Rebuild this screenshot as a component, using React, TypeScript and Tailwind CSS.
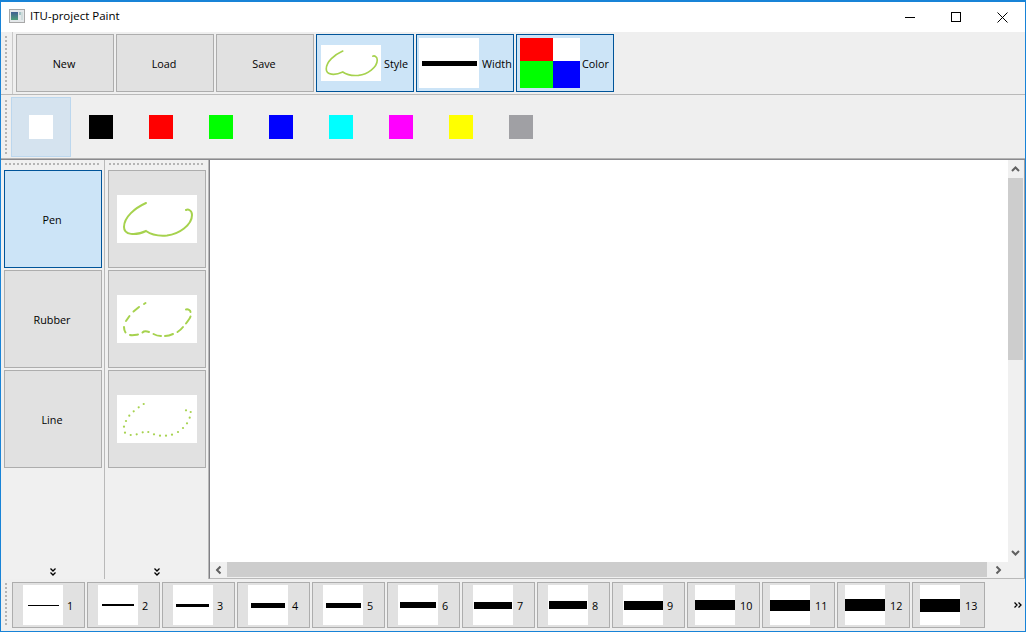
import React from "react";

const CURVE = "M29 8 C 18 13, 7 22, 7 32 C 7 40, 18 41, 29 36 C 36 41, 44 41, 50 40.5 C 62 39, 75 30, 75 20 C 75 15, 71 14, 69 15";

function Curve({ className, sw = 2 }: { className: string; sw?: number }) {
  return (
    <svg viewBox="0 0 80 48" className={className}>
      <path d={CURVE} fill="none" stroke="#a6d24e" strokeWidth={sw} strokeLinecap="round" />
    </svg>
  );
}

function Dashed({ className }: { className: string }) {
  const segs = [
    "M27 9 L28.500 8", "M16.500 16.500 L22 12", "M9 26 L12.500 21", "M7 32 C7 35 7.500 36 8.500 37.500",
    "M13 40 C16 40.500 18 40 21 39.500", "M25.500 37.500 C27 36 29 36 32 37", "M36.500 39 C39 40.500 41 41 44 41",
    "M48 41 C50 41 53 40.500 56 39", "M60.500 37 C63 35.500 64.500 34 66 32", "M69 28.500 C71 26 73 23 73.500 21.500",
    "M73.500 17 C73.500 15 71 14 69 14.500",
  ];
  return (
    <svg viewBox="0 0 80 48" className={className}>
      {segs.map((d) => (
        <path key={d} d={d} fill="none" stroke="#a6d24e" strokeWidth="2" strokeLinecap="round" />
      ))}
    </svg>
  );
}

function Dotted({ className }: { className: string }) {
  const pts = [
    [26.7, 9], [21.7, 12.3], [16.7, 16.3], [12.3, 20.7], [9, 26], [7, 31.7], [8, 37.7], [13.7, 40], [19.7, 39.3],
    [25.7, 37.3], [31.3, 37], [37, 39.3], [43, 40.7], [49, 40.7], [55, 39.7], [61, 37], [66, 33], [70, 28.3],
    [72.7, 22.7], [73.7, 17], [69, 15.3],
  ];
  return (
    <svg viewBox="0 0 80 48" className={className}>
      {pts.map(([x, y]) => (
        <circle key={`${x}-${y}`} cx={x} cy={y} r="1.1" fill="#a6d24e" />
      ))}
    </svg>
  );
}

const HANDLE_H = "h-[2px] bg-[linear-gradient(90deg,#b4b4b4_2px,transparent_2px)] bg-[length:4px_2px]";
const HANDLE_V = "w-[2px] bg-[linear-gradient(180deg,#b4b4b4_2px,transparent_2px)] bg-[length:2px_4px]";

function Btn({ children, on, className }: { children?: React.ReactNode; on?: boolean; className: string }) {
  return (
    <div
      className={`flex shrink-0 items-center justify-center border ${on ? "border-[#005499] bg-[#cce4f7]" : "border-[#adadad] bg-[#e1e1e1]"} ${className}`}
    >
      {children}
    </div>
  );
}

function Label({ children, className = "" }: { children: React.ReactNode; className?: string }) {
  return <span className={`pt-[2px] ${className}`}>{children}</span>;
}

function ChevronsDown() {
  return (
    <svg width="6" height="8" viewBox="0 0 6 8">
      <path d="M0.500 0.500 L3 3 L5.500 0.500 M0.500 4.500 L3 7 L5.500 4.500" fill="none" stroke="#000" strokeWidth="1.3" />
    </svg>
  );
}

function ChevronsRight() {
  return (
    <svg width="8" height="6" viewBox="0 0 8 6">
      <path d="M0.500 0.500 L3 3 L0.500 5.500 M4.500 0.500 L7 3 L4.500 5.500" fill="none" stroke="#000" strokeWidth="1.3" />
    </svg>
  );
}

function Arrow({ rot }: { rot: string }) {
  return (
    <svg width="9" height="6" viewBox="0 0 9 6" className={rot}>
      <path d="M1 5 L4.500 1.500 L8 5" fill="none" stroke="#606060" strokeWidth="2" />
    </svg>
  );
}

const swatches = ["#ffffff", "#000000", "#ff0000", "#00ff00", "#0000ff", "#00ffff", "#ff00ff", "#ffff00", "#a0a0a4"];
const widths = [1, 2, 3, 5, 5, 6, 7, 8, 9, 10, 11, 12, 13];
const lineSpans: [number, number][] = [[5, 36], [4, 36], [3, 36], [3, 37], [3, 38], [2, 38], [1, 39], [1, 39], [1, 40], [0, 40], [0, 40], [0, 40], [0, 40]];

export default function App() {
  return (
    <div className="flex h-[632px] w-[1026px] flex-col overflow-hidden border border-t-2 border-[#1883d7] bg-[#f0f0f0] font-['Open_Sans','Noto_Sans',sans-serif] text-[10.8px] text-black">
      {/* Title bar */}
      <div className="flex h-[30px] shrink-0 items-center bg-white">
        <svg width="16" height="14" viewBox="0 0 16 14" className="ml-[8px] mt-[-2px]">
          <defs>
            <linearGradient id="ico" x1="0" y1="0" x2="0" y2="1">
              <stop offset="0" stopColor="#3f5f92" />
              <stop offset="1" stopColor="#4f9f7a" />
            </linearGradient>
          </defs>
          <rect x="0.500" y="0.500" width="15" height="13" fill="#e4e8ea" stroke="#a8a8a8" />
          <rect x="2" y="3" width="7" height="8" fill="url(#ico)" />
          <rect x="10" y="3" width="2" height="3" fill="#a4c4c4" />
          <rect x="12" y="3" width="2" height="8" fill="#cfdcdc" />
        </svg>
        <span className="ml-[5px] mt-[-2px] text-[11.5px] leading-none">ITU-project Paint</span>
        <div className="ml-auto flex h-full items-center">
          <div className="flex h-full w-[46px] items-center justify-center">
            <div className="h-px w-[10px] bg-black" />
          </div>
          <div className="flex h-full w-[46px] items-center justify-center">
            <div className="h-[10px] w-[10px] border border-black" />
          </div>
          <div className="flex h-full w-[46px] items-center justify-center">
            <svg width="11" height="11" viewBox="0 0 11 11">
              <path d="M0.500 0.500 L10.500 10.500 M10.500 0.500 L0.500 10.500" stroke="#000" strokeWidth="1" />
            </svg>
          </div>
        </div>
      </div>

      {/* Main toolbar */}
      <div className="flex h-[63px] shrink-0 items-center border-b border-[#b9b9b9] bg-[#efefef]">
        <div className={`ml-[4px] mr-[5px] h-[54px] shrink-0 ${HANDLE_V}`} />
        <div className="h-full w-px bg-[#c8c8c8]" />
        <div className="ml-[3px] flex gap-[2px]">
          <Btn className="h-[58px] w-[98px]"><Label className="pr-[2px]">New</Label></Btn>
          <Btn className="h-[58px] w-[98px]"><Label className="pr-[2px]">Load</Label></Btn>
          <Btn className="h-[58px] w-[98px]"><Label className="pr-[2px]">Save</Label></Btn>
          <Btn on className="h-[58px] w-[98px] justify-start pl-[4px]">
            <div className="h-[36px] w-[60px] bg-white">
              <Curve className="h-[36px] w-[60px]" sw={2.2} />
            </div>
            <Label className="ml-[3px]">Style</Label>
          </Btn>
          <Btn on className="h-[58px] w-[98px] justify-start pl-[2px]">
            <div className="flex h-[50px] w-[60px] items-center justify-center bg-white pl-[1px]">
              <div className="h-[5px] w-[55px] bg-black" />
            </div>
            <Label className="ml-[3px]">Width</Label>
          </Btn>
          <Btn on className="h-[58px] w-[98px] justify-start pl-[3px]">
            <div className="grid h-[50px] w-[60px] grid-cols-[33px_27px] grid-rows-[23px_27px]">
              <div className="bg-[#ff0000]" />
              <div className="bg-white" />
              <div className="bg-[#00ff00]" />
              <div className="bg-[#0000ff]" />
            </div>
            <Label className="ml-[2px]">Color</Label>
          </Btn>
        </div>
      </div>

      {/* Colour toolbar */}
      <div className="flex h-[65px] shrink-0 items-center border-b border-[#8a8a8e] bg-[#efefef] shadow-[inset_0_-1px_0_#b4b4b4]">
        <div className={`ml-[4px] mr-[4px] h-[54px] shrink-0 ${HANDLE_V}`} />
        <div className="flex">
          {swatches.map((c, i) => (
            <div
              key={c}
              className={`flex h-[60px] w-[60px] items-center justify-center border ${i === 0 ? "border-[#bcd7ee] bg-[#d5e3ef]" : "border-transparent"}`}
            >
              <div className="h-[24px] w-[24px]" style={{ backgroundColor: c }} />
            </div>
          ))}
        </div>
      </div>

      {/* Body */}
      <div className="flex min-h-0 flex-1">
        <div className="flex w-[104px] shrink-0 flex-col border-r border-[#b9b9b9] pl-[3px] pt-[3px]">
          <div className={`ml-[1px] w-[96px] ${HANDLE_H}`} />
          <div className="mt-[5px] flex flex-col gap-[2px]">
            <Btn on className="h-[98px] w-[98px]"><Label className="pr-[2px]">Pen</Label></Btn>
            <Btn className="h-[98px] w-[98px]"><Label className="pr-[2px]">Rubber</Label></Btn>
            <Btn className="h-[98px] w-[98px]"><Label className="pr-[2px]">Line</Label></Btn>
          </div>
          <div className="mb-[3px] mt-auto flex h-[8px] w-[98px] items-center justify-center">
            <ChevronsDown />
          </div>
        </div>
        <div className="flex w-[104px] shrink-0 flex-col border-r border-[#b9b9b9] pl-[3px] pt-[3px]">
          <div className={`ml-[1px] w-[96px] ${HANDLE_H}`} />
          <div className="mt-[5px] flex flex-col gap-[2px]">
            <Btn className="h-[98px] w-[98px]">
              <div className="bg-white"><Curve className="h-[48px] w-[80px]" /></div>
            </Btn>
            <Btn className="h-[98px] w-[98px]">
              <div className="bg-white"><Dashed className="h-[48px] w-[80px]" /></div>
            </Btn>
            <Btn className="h-[98px] w-[98px]">
              <div className="bg-white"><Dotted className="h-[48px] w-[80px]" /></div>
            </Btn>
          </div>
          <div className="mb-[3px] mt-auto flex h-[8px] w-[98px] items-center justify-center">
            <ChevronsDown />
          </div>
        </div>

        {/* Canvas */}
        <div className="flex min-w-0 flex-1 border-b border-l border-r border-[#a0a0a4] border-b-[#b9b9b9] border-l-[#808085] bg-white">
          <div className="flex min-w-0 flex-1 flex-col">
            <div className="flex min-h-0 flex-1">
              <div className="flex-1 bg-white" />
              <div className="flex w-[15px] shrink-0 flex-col bg-[#f0f0f0]">
                <div className="flex h-[18px] items-center justify-center"><Arrow rot="" /></div>
                <div className="h-[182px] bg-[#cdcdcd]" />
                <div className="flex-1" />
                <div className="flex h-[18px] items-center justify-center"><Arrow rot="rotate-180" /></div>
              </div>
            </div>
            <div className="flex h-[15px] shrink-0 bg-[#f0f0f0]">
              <div className="flex w-[17px] items-center justify-center"><Arrow rot="-rotate-90" /></div>
              <div className="w-[760px] bg-[#cdcdcd]" />
              <div className="flex w-[22px] items-center justify-center"><Arrow rot="rotate-90" /></div>
              <div className="flex-1" />
            </div>
            <div className="h-px shrink-0 bg-[#f0f0f0]" />
          </div>
          <div className="w-px shrink-0 bg-[#f0f0f0]" />
        </div>
      </div>

      {/* Bottom toolbar */}
      <div className="flex h-[52px] shrink-0 items-center bg-[#efefef]">
        <div className={`ml-[4px] mr-[5px] h-[44px] shrink-0 ${HANDLE_V}`} />
        <div className="flex gap-[2px]">
          {widths.map((w, i) => (
            <Btn key={i} className={`h-[46px] w-[73px] justify-start ${i >= 9 ? "pl-[7px]" : "pl-[10px]"}`}>
              <div className="flex h-[40px] w-[40px] items-center bg-white">
                <div
                  className="bg-black"
                  style={{ height: w, marginLeft: lineSpans[i][0], width: lineSpans[i][1] - lineSpans[i][0] }}
                />
              </div>
              <Label className={i >= 9 ? "ml-[5px]" : "ml-[4px]"}>{i + 1}</Label>
            </Btn>
          ))}
        </div>
        <div className="ml-auto mr-[3px] flex items-center"><ChevronsRight /></div>
      </div>
    </div>
  );
}
